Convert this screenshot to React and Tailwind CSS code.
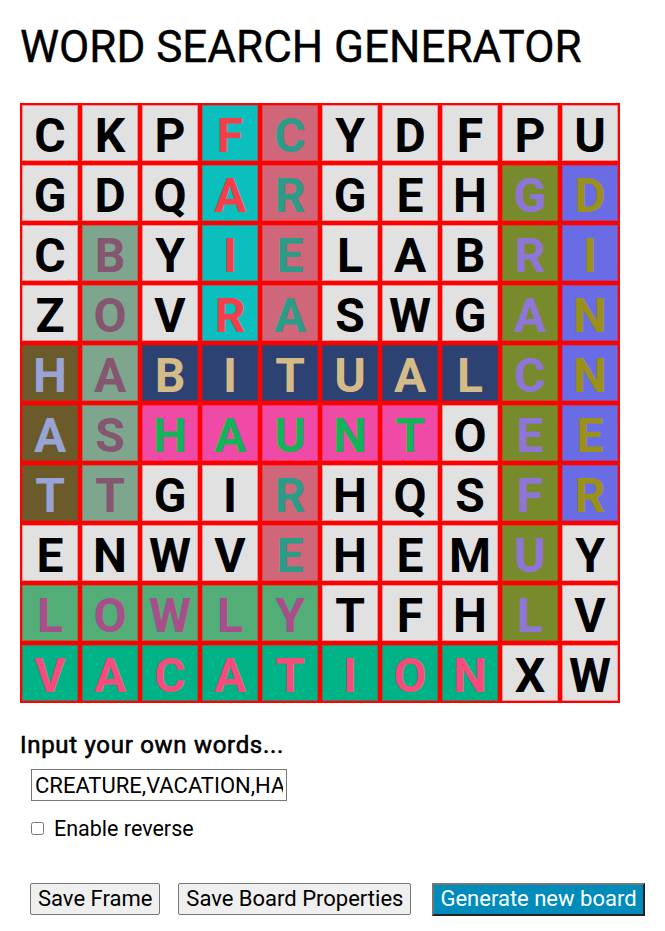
import { useState } from "react";

const letters = [
    "CKPFCYDFPU",
    "GDQARGEHGD",
    "CBYIELABRI",
    "ZOVRASWGAN",
    "HABITUALCN",
    "ASHAUNTOEE",
    "TTGIRHQSFR",
    "ENWVEHEMUY",
    "LOWLYTFHLV",
    "VACATIONXW",
];

// which word each cell belongs to (last one drawn wins)
const owners = [
    "gggfcggggg",
    "gggfcgggrd",
    "gbgfcgggrd",
    "gbgfcgggrd",
    "hbHHHHHHrd",
    "hbnnnnngrd",
    "hbggcgggrd",
    "ggggcgggrg",
    "lllllgggrg",
    "vvvvvvvvgg",
];

const palette = {
    g: "bg-[#e1e1e1] text-black",
    f: "bg-[#0bbfbf] text-[#f43f4b]",
    c: "bg-[#d06679] text-[#2b9c87]",
    b: "bg-[#7ea68f] text-[#85566f]",
    h: "bg-[#6b5b2b] text-[#98a3d6]",
    H: "bg-[#2c4272] text-[#d5bb88]",
    n: "bg-[#ef4aa6] text-[#12b457]",
    r: "bg-[#788b2c] text-[#8e76d8]",
    d: "bg-[#6a6ce6] text-[#9b9118]",
    l: "bg-[#52ad76] text-[#a84f8b]",
    v: "bg-[#00b386] text-[#f74b7c]",
};

const Cell = ({ letter, owner }) => (
    <div
        className={`w-[56px] h-[56px] m-[2px] border border-[#ff000055] flex items-center justify-center pt-[5px] text-[48px] font-bold leading-none ${palette[owner]}`}
    >
        {letter}
    </div>
);

const App = () => {
    const [words, setWords] = useState("CREATURE,VACATION,HABITUAL,HAUNT,GRACEFUL,DINNER,LOWLY,BOAST,FAIR,HAT");
    const [reverse, setReverse] = useState(false);

    return (
        <div className="px-5 pt-[25px] bg-white min-h-screen text-black font-['Roboto',sans-serif]">
            <h1 className="text-[44px] leading-none font-normal mb-[34px] [-webkit-text-stroke:0.4px_black]">WORD SEARCH GENERATOR</h1>

            <div className="w-[600px] bg-[#ff0000] flex flex-wrap">
                {letters.map((row, r) =>
                    row.split("").map((ch, c) => (
                        <Cell key={`${r}-${c}`} letter={ch} owner={owners[r][c]} />
                    ))
                )}
            </div>

            <h2 className="mt-[30px] text-[24px] font-normal leading-none tracking-[0.7px] [-webkit-text-stroke:0.6px_black]">Input your own words...</h2>

            <div className="mt-[12px] ml-[11px]">
                <input
                    className="w-[256px] h-[32px] border border-[#767676] px-[3px] text-[22px] leading-none outline-none"
                    type="text"
                    value={words}
                    onChange={(e) => setWords(e.target.value)}
                />
            </div>

            <label className="mt-[17px] ml-[11px] flex items-center gap-[10px] text-[21.5px] leading-none">
                <input
                    type="checkbox"
                    className="w-[13px] h-[13px] m-0"
                    checked={reverse}
                    onChange={(e) => setReverse(e.target.checked)}
                />
                Enable reverse
            </label>

            <div className="mt-[43px] ml-[10px] flex items-center gap-[18px] whitespace-nowrap">
                <button className="shrink-0 h-[32px] px-[7px] bg-[#efefef] border border-[#767676] rounded-[2px] text-[22px] leading-none">
                    Save Frame
                </button>
                <button className="shrink-0 h-[32px] px-[7px] bg-[#efefef] border border-[#767676] rounded-[2px] text-[22px] leading-none">
                    Save Board Properties
                </button>
                <button className="shrink-0 ml-[3px] h-[33px] px-[6px] bg-[#008cba] text-white border-2 border-t-[#767676] border-l-[#767676] border-r-[#222222] border-b-[#222222] text-[22px] leading-none">
                    Generate new board
                </button>
            </div>
        </div>
    );
};

export default App;
